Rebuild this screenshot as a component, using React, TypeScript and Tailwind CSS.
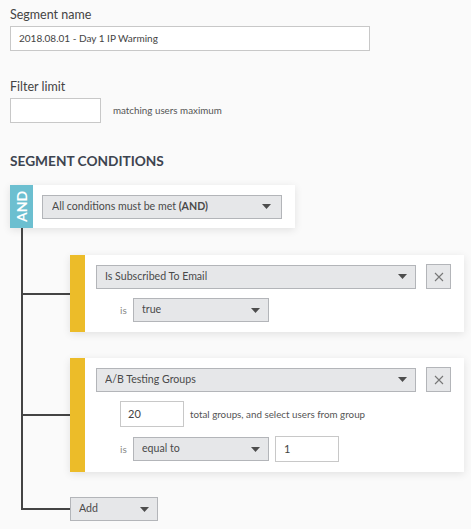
import React from "react";

const font = { fontFamily: "Lato, 'Liberation Sans', sans-serif" };

const Caret = () => (
  <svg width="9" height="5" viewBox="0 0 9 5" className="shrink-0">
    <path d="M0 0 L9 0 L4.5 5 Z" fill="#4d4d4d" />
  </svg>
);

const Select = ({ label, className }: { label: React.ReactNode; className: string }) => (
  <div
    className={`flex items-center justify-between border border-[#b3b5b9] bg-[#e6e7e9] pl-[8px] pr-[8px] text-[10.6px] text-[#4a4a4a] ${className}`}
  >
    <span className="truncate">{label}</span>
    <Caret />
  </div>
);

const CloseButton = () => (
  <div className="flex h-[25px] w-[25px] shrink-0 items-center justify-center border border-[#b3b5b9] bg-[#e6e7e9]">
    <svg width="10" height="10" viewBox="0 0 10 10">
      <path d="M1 1 L9 9 M9 1 L1 9" stroke="#777" strokeWidth="1.1" />
    </svg>
  </div>
);

const Connector = () => <div className="h-[2px] w-[47px] shrink-0 bg-[#444]" />;

const Card = ({ title, children }: { title: string; children: React.ReactNode }) => (
  <div className="flex w-[394px] bg-white shadow-[0_2px_8px_rgba(0,0,0,0.1)]">
    <div className="w-[15px] shrink-0 bg-[#ecbc29]" />
    <div className="flex flex-1 flex-col gap-[9px] pb-[10px] pl-[11px] pr-[13px] pt-[9px]">
      <div className="flex items-center gap-[10px]">
        <Select label={title} className="h-[24px] w-[320px]" />
        <CloseButton />
      </div>
      {children}
    </div>
  </div>
);

export default function App() {
  return (
    <div className="min-h-[529px] bg-[#fafafa] pl-[10px] pt-[6px] text-[#444]" style={font}>
      <label className="block text-[12.5px] leading-[18px] text-[#444]">Segment name</label>
      <div className="mt-[2px] flex h-[25px] w-[360px] items-center border border-[#c8c8c8] bg-white pl-[8px] text-[10px] text-[#444]">
        2018.08.01 - Day 1 IP Warming
      </div>

      <label className="mt-[27px] block text-[12.5px] leading-[18px] text-[#444]">Filter limit</label>
      <div className="mt-[2px] flex items-center">
        <div className="h-[25px] w-[91px] border border-[#c8c8c8] bg-white" />
        <span className="ml-[12px] text-[9.8px] text-[#555]">matching users maximum</span>
      </div>

      <h2 className="mt-[29px] text-[13.7px] font-bold leading-[18px] text-[#3d4450]">SEGMENT CONDITIONS</h2>

      <div className="mt-[15px] flex h-[43px] w-[285px] bg-white shadow-[0_2px_8px_rgba(0,0,0,0.1)]">
        <div className="flex w-[23px] shrink-0 items-center justify-center bg-[#6cbfd0]">
          <span className="-rotate-90 text-[14px] font-bold text-white">AND</span>
        </div>
        <div className="flex flex-1 items-center pl-[9px] pr-[13px]">
          <Select
            label={
              <>
                All conditions must be met <b className="font-bold">(AND)</b>
              </>
            }
            className="h-[24px] w-full pl-[9px] pr-[10px]"
          />
        </div>
      </div>

      <div className="ml-[11px] flex flex-col">
        <div className="flex flex-col gap-[26px] border-l-2 border-[#444] pb-[25px] pt-[27px]">
          <div className="flex items-center">
            <Connector />
            <Card title="Is Subscribed To Email">
              <div className="flex items-center">
                <span className="w-[37px] pl-[24px] text-[10px] text-[#888]">is</span>
                <Select label="true" className="h-[24px] w-[136px]" />
              </div>
            </Card>
          </div>
          <div className="flex items-center">
            <Connector />
            <Card title="A/B Testing Groups">
              <div className="flex items-center pl-[24px]">
                <div className="flex h-[26px] w-[64px] items-center border border-[#c8c8c8] bg-white pl-[7px] text-[11px] text-[#444]">
                  20
                </div>
                <span className="ml-[6px] text-[9.8px] text-[#555]">total groups, and select users from group</span>
              </div>
              <div className="flex items-center">
                <span className="w-[37px] pl-[24px] text-[10px] text-[#888]">is</span>
                <Select label="equal to" className="h-[24px] w-[136px]" />
                <div className="ml-[6px] flex h-[26px] w-[64px] items-center border border-[#c8c8c8] bg-white pl-[8px] text-[11px] text-[#444]">
                  1
                </div>
              </div>
            </Card>
          </div>
        </div>
        <div className="flex items-start">
          <div className="h-[13px] w-[49px] shrink-0 border-b-2 border-l-2 border-[#444]" />
          <Select label="Add" className="h-[24px] w-[88px]" />
        </div>
      </div>
    </div>
  );
}
